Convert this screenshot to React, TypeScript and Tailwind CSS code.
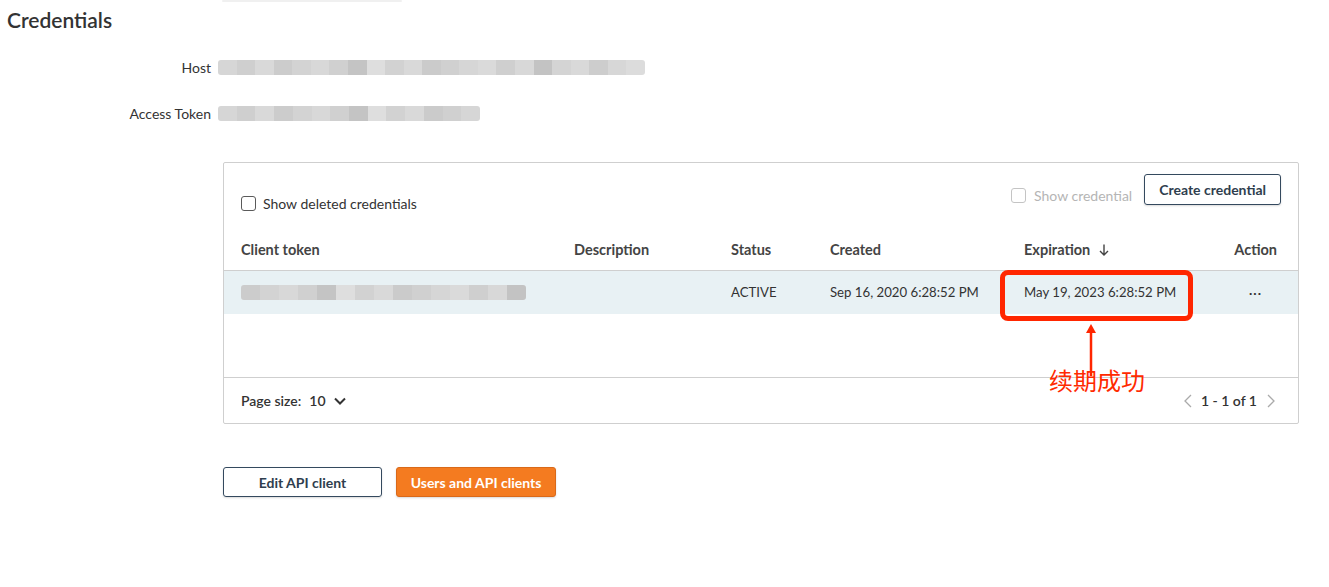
import React from "react";

const hostBlocks = [
  "bg-[#d6d6d6]", "bg-[#cfcfcf]", "bg-[#d9d9d9]", "bg-[#cccccc]", "bg-[#d3d3d3]", "bg-[#d8d8d8]",
  "bg-[#d0d0d0]", "bg-[#c4c4c4]", "bg-[#dedede]", "bg-[#d2d2d2]", "bg-[#d9d9d9]", "bg-[#cbcbcb]",
  "bg-[#d0d0d0]", "bg-[#d6d6d6]", "bg-[#dadada]", "bg-[#cfcfcf]", "bg-[#d8d8d8]", "bg-[#c3c3c3]",
  "bg-[#d4d4d4]", "bg-[#d9d9d9]", "bg-[#cdcdcd]", "bg-[#d7d7d7]", "bg-[#dcdcdc]",
];

function Blur({ width, blocks }: { width: number; blocks: string[] }) {
  return (
    <div className="flex h-[15px] rounded-[3px] overflow-hidden" style={{ width }}>
      {blocks.map((c, i) => (
        <div key={i} className={`flex-1 ${c}`} />
      ))}
    </div>
  );
}

function Checkbox({ disabled }: { disabled?: boolean }) {
  return (
    <span
      className={
        disabled
          ? "inline-block w-[15px] h-[15px] rounded-[3px] border-[1.5px] border-[#c4c4c4] bg-white"
          : "inline-block w-[15px] h-[15px] rounded-[3px] border-[1.5px] border-[#5a5a5a] bg-white"
      }
    />
  );
}

export default function App() {
  return (
    <div className="w-[1329px] h-[587px] bg-white text-[#333] overflow-hidden font-['Lato','Noto_Sans','Noto_Sans_CJK_SC',sans-serif]">
      <div className="ml-[222px] w-[180px] h-[2px] bg-[#f0f0f0] rounded" />

      <h1 className="mt-[4px] pl-[7px] text-[21px] leading-[28px] font-semibold text-[#333]">Credentials</h1>

      {/* Host */}
      <div className="mt-[23px] flex items-center h-[20px]">
        <div className="w-[211px] text-right text-[14px]">Host</div>
        <div className="ml-[7px]">
          <Blur width={427} blocks={hostBlocks} />
        </div>
      </div>

      {/* Access token */}
      <div className="mt-[26px] flex items-center h-[20px]">
        <div className="w-[211px] text-right text-[14px]">Access Token</div>
        <div className="ml-[7px]">
          <Blur width={262} blocks={hostBlocks.slice(0, 14)} />
        </div>
      </div>

      {/* Card */}
      <div className="relative mt-[39px] ml-[223px] w-[1076px] border border-[#cfcfcf] rounded-[2px]">
        <div className="h-[66px] flex justify-between px-[17px] pr-[17px]">
          <div className="mt-[30px] flex items-center gap-[7px] h-[20px] self-start text-[14px]">
            <Checkbox />
            <span>Show deleted credentials</span>
          </div>
          <div className="mt-[11px] flex items-start self-start">
            <div className="mt-[11px] flex items-center gap-[8px] text-[14px] text-[#b5b5b5]">
              <Checkbox disabled />
              <span>Show credential</span>
            </div>
            <button className="ml-[12px] h-[31px] px-[14px] rounded-[3px] border border-[#34495e] text-[14px] font-bold text-[#2f3e4e] shadow-[0_1px_2px_rgba(0,0,0,0.15)]">
              Create credential
            </button>
          </div>
        </div>

        {/* Header */}
        <div className="h-[42px] grid grid-cols-[333px_157px_99px_194px_1fr_auto] items-center pl-[17px] pr-[21px] border-b border-[#cfcfcf] text-[14.5px] font-bold text-[#444]">
          <div>Client token</div>
          <div>Description</div>
          <div>Status</div>
          <div>Created</div>
          <div className="flex items-center gap-[9px]">
            Expiration
            <svg width="10" height="12" viewBox="0 0 10 12" fill="none" stroke="#444" strokeWidth="1.4">
              <path d="M5 0.5V11M1 7l4 4 4-4" />
            </svg>
          </div>
          <div>Action</div>
        </div>

        {/* Row */}
        <div className="h-[43px] grid grid-cols-[333px_157px_99px_194px_1fr_auto] items-center pl-[17px] pr-[36px] bg-[#e8f1f4] text-[13.2px]">
          <div>
            <Blur width={285} blocks={hostBlocks.slice(3, 18)} />
          </div>
          <div />
          <div>ACTIVE</div>
          <div>Sep 16, 2020 6:28:52 PM</div>
          <div>May 19, 2023 6:28:52 PM</div>
          <div className="text-[14px] tracking-[1px] font-bold leading-none pb-[6px]">...</div>
        </div>

        <div className="h-[64px] border-b border-[#cfcfcf]" />

        {/* Footer */}
        <div className="h-[45px] flex items-center justify-between pl-[17px] pr-[22px] text-[14px]">
          <div className="flex items-center font-semibold">
            <span>Page size:</span>
            <span className="ml-[8px]">10</span>
            <svg className="ml-[8px]" width="12" height="8" viewBox="0 0 12 8" fill="none" stroke="#333" strokeWidth="2">
              <path d="M1 1.5l5 5 5-5" />
            </svg>
          </div>
          <div className="flex items-center">
            <svg width="9" height="14" viewBox="0 0 9 14" fill="none" stroke="#aaa" strokeWidth="1.3">
              <path d="M8 1L2 7l6 6" />
            </svg>
            <span className="ml-[9px] font-semibold">1 - 1 of 1</span>
            <svg className="ml-[10px]" width="9" height="14" viewBox="0 0 9 14" fill="none" stroke="#aaa" strokeWidth="1.3">
              <path d="M1 1l6 6-6 6" />
            </svg>
          </div>
        </div>

        {/* annotation */}
        <div className="absolute left-[776px] top-[107px] w-[193px] h-[51px] border-[5px] border-[#ff2600] rounded-[8px]" />
        <svg className="absolute left-[860px] top-[158px]" width="14" height="56" viewBox="0 0 14 56">
          <path d="M7 3L2 12h10z" fill="#ff2600" />
          <path d="M7 10V55" stroke="#ff2600" strokeWidth="2.5" />
        </svg>
        <div className="absolute left-[825px] top-[202px] text-[24px] leading-[30px] text-[#ff2a00] font-['Noto_Sans_CJK_SC',sans-serif]">
          续期成功
        </div>
      </div>

      {/* Buttons */}
      <div className="mt-[43px] ml-[223px] flex gap-[14px]">
        <button className="w-[159px] h-[30px] rounded-[3px] border border-[#34495e] text-[14px] font-bold text-[#2f3e4e] shadow-[0_1px_2px_rgba(0,0,0,0.15)]">
          Edit API client
        </button>
        <button className="w-[160px] h-[30px] rounded-[3px] border border-[#d9691a] bg-[#f47b20] text-[14px] font-bold text-white shadow-[0_1px_2px_rgba(0,0,0,0.15)]">
          Users and API clients
        </button>
      </div>
    </div>
  );
}
